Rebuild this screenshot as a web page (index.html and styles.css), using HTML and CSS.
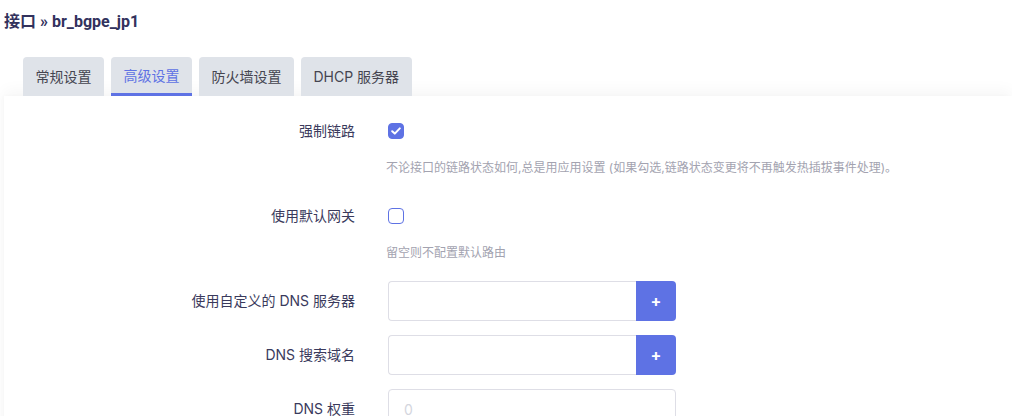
FILE: index.html
```html
<!DOCTYPE html>
<html lang="zh">
<head>
    <meta charset="UTF-8">
    <title>接口 - br_bgpe_jp1</title>
    <link rel="stylesheet" href="styles.css">
</head>
<body>
    <h2 class="page-title">接口 » br_bgpe_jp1</h2>

    <!-- Abas -->
    <ul class="tabs">
        <li class="tab">常规设置</li>
        <li class="tab active">高级设置</li>
        <li class="tab">防火墙设置</li>
        <li class="tab">DHCP 服务器</li>
    </ul>

    <div class="panel">
        <div class="row">
            <label class="row-label">强制链路</label>
            <div class="row-field">
                <div class="control">
                    <span class="checkbox checked">
                        <svg width="10" height="8" viewBox="0 0 10 8"><path d="M1.2 4.2 L3.8 6.6 L8.8 1.4" fill="none" stroke="#fff" stroke-width="2" stroke-linecap="round" stroke-linejoin="round"/></svg>
                    </span>
                </div>
                <div class="desc">不论接口的链路状态如何,总是用应用设置 (如果勾选,链路状态变更将不再触发热插拔事件处理)。</div>
            </div>
        </div>

        <div class="row">
            <label class="row-label">使用默认网关</label>
            <div class="row-field">
                <div class="control">
                    <span class="checkbox"></span>
                </div>
                <div class="desc">留空则不配置默认路由</div>
            </div>
        </div>

        <div class="row">
            <label class="row-label">使用自定义的 DNS 服务器</label>
            <div class="row-field">
                <div class="control">
                    <div class="input-group">
                        <input class="text-input" type="text">
                        <button class="add-btn">+</button>
                    </div>
                </div>
            </div>
        </div>

        <div class="row">
            <label class="row-label">DNS 搜索域名</label>
            <div class="row-field">
                <div class="control">
                    <div class="input-group">
                        <input class="text-input" type="text">
                        <button class="add-btn">+</button>
                    </div>
                </div>
            </div>
        </div>

        <div class="row">
            <label class="row-label">DNS 权重</label>
            <div class="row-field">
                <div class="control">
                    <input class="text-input single" type="text" placeholder="0">
                </div>
            </div>
        </div>
    </div>
</body>
</html>
```

FILE: styles.css
```css
html, body {
    margin: 0;
    padding: 0;
    background: #fff;
    overflow: hidden; /* sem barras de rolagem */
}

body {
    font-family: Inter, "Noto Sans CJK SC", sans-serif;
    color: #32325d;
    padding: 0 0 0 4px;
}

.page-title {
    margin: 0;
    height: 44px;
    line-height: 44px;
    font-family: Roboto, "Noto Sans CJK SC", sans-serif;
    font-size: 16px;
    font-weight: 700;
    color: #32325d;
}

/* Abas */
.tabs {
    list-style: none;
    margin: 13px 0 0 0;
    padding: 0 0 0 19px;
    display: flex;
    gap: 7px;
}

.tab {
    height: 39px;
    line-height: 39px;
    padding: 0 12.5px;
    background: #dfe3e9;
    border-radius: 4px 4px 0 0;
    font-size: 14px;
    color: #454550;
    box-sizing: border-box;
}

.tab.active {
    color: #5e72e4;
    border-bottom: 3px solid #5e72e4;
    line-height: 37px;
}

/* Painel principal */
.panel {
    background: #fff;
    padding: 15px 0 0 0;
    height: 400px;
    box-shadow: 0 -6px 14px rgba(0, 0, 0, 0.035), -2px 0 4px rgba(0, 0, 0, 0.02);
}

.row {
    display: flex;
    margin-bottom: 14px;
}

.row-label {
    width: 351px;
    text-align: right;
    font-size: 14px;
    line-height: 40px;
    color: #3a3a5c;
    margin-right: 33px;
}

.row-field {
    flex: 1;
}

.control {
    height: 40px;
    display: flex;
    align-items: center;
}

.desc {
    margin: 8px 0 5px -2px;
    font-size: 12px;
    line-height: 18px;
    color: #a3a3b0;
}

/* Caixas de seleção */
.checkbox {
    width: 16px;
    height: 16px;
    box-sizing: border-box;
    border: 1px solid #5e72e4;
    border-radius: 4px;
    display: flex;
    align-items: center;
    justify-content: center;
    background: #fff;
}

.checkbox.checked {
    background: #5e72e4;
}

/* Campos de texto */
.input-group {
    display: flex;
}

.text-input {
    width: 248px;
    height: 40px;
    box-sizing: border-box;
    border: 1px solid #dedee6;
    border-right: none;
    border-radius: 4px 0 0 4px;
    padding: 0 15px;
    font-family: Inter, "Noto Sans CJK SC", sans-serif;
    font-size: 14px;
    color: #32325d;
    outline: none;
}

.text-input.single {
    width: 288px;
    border-right: 1px solid #dedee6;
    border-radius: 4px;
}

.text-input::placeholder {
    color: #d4d6de;
}

.add-btn {
    width: 40px;
    height: 40px;
    border: none;
    border-radius: 0 4px 4px 0;
    background: #5e72e4;
    color: #fff;
    font-family: Inter, sans-serif;
    font-size: 16px;
    font-weight: 700;
    padding: 0;
}
```
